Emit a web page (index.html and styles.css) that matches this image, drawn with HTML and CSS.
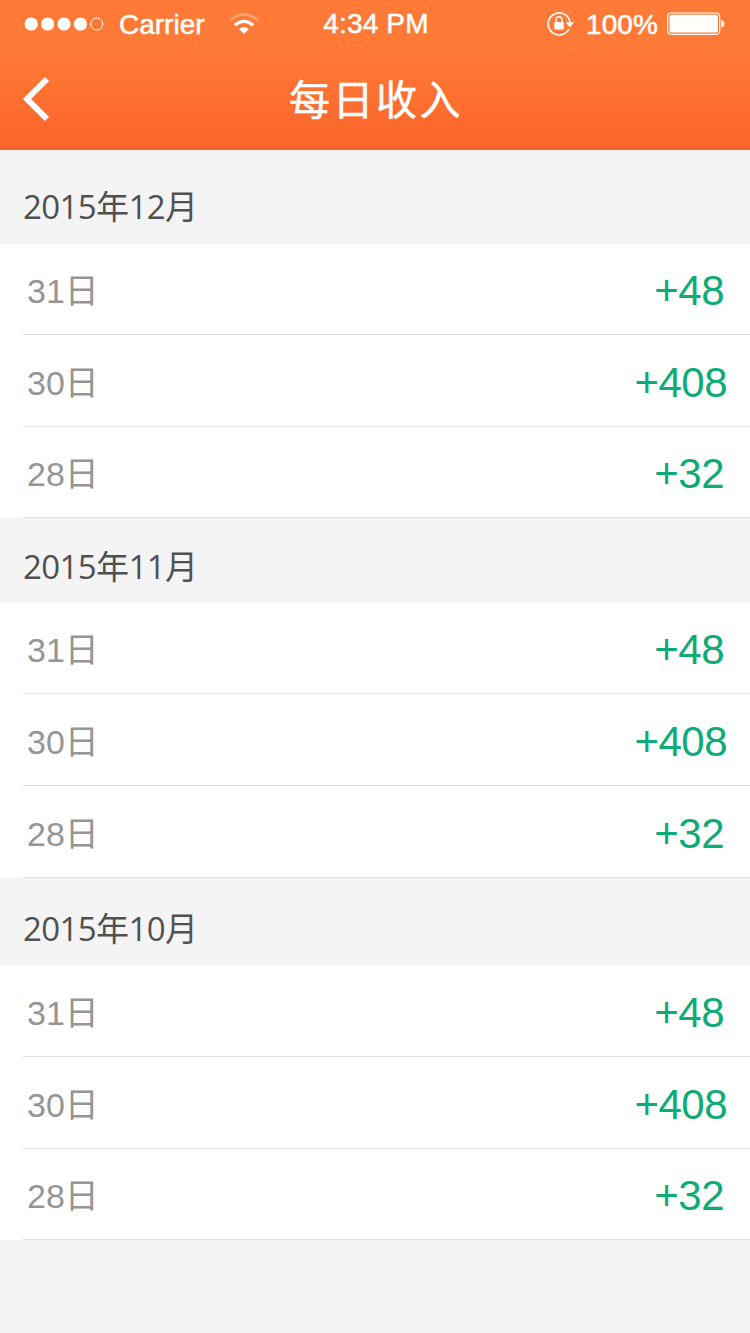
FILE: index.html
```html
<!DOCTYPE html>
<html lang="zh-CN">
<head>
<meta charset="utf-8">
<title>每日收入</title>
<link rel="stylesheet" href="styles.css">
</head>
<body>
<header class="top">
  <div class="status">
    <div class="status-left">
      <svg class="signal" width="80" height="16" viewBox="0 0 80 16"><g fill="#fff"><circle cx="7.2" cy="8" r="6.6"/><circle cx="23.6" cy="8" r="6.6"/><circle cx="40" cy="8" r="6.6"/><circle cx="56.4" cy="8" r="6.6"/></g><circle cx="72.8" cy="8" r="6" fill="none" stroke="#fff" stroke-width="1"/></svg>
      <span class="carrier">Carrier</span>
      <svg class="wifi" width="30" height="22" viewBox="0 0 30 22" fill="none"><path d="M1.2 7.2Q15-4.2 28.8 7.2" stroke="#fff" stroke-opacity=".32" stroke-width="2.6"/><path d="M5.8 12.3Q15 4.6 24.2 12.3" stroke="#fff" stroke-width="3.2"/><path d="M10.2 16.2Q15 11.8 19.8 16.2L15 21Z" fill="#fff"/></svg>
    </div>
    <span class="time">4:34 PM</span>
    <div class="status-right">
      <svg class="lock" width="28" height="26" viewBox="0 0 28 26" fill="none"><path d="M21.9 18.1A11 11 0 1 1 22.6 9.4L23 11.5" stroke="#fff" stroke-width="1.6"/><path d="M18.8 11.2H27L22.9 16.5Z" fill="#fff"/><rect x="7.3" y="11" width="9.4" height="7.4" rx=".7" fill="#fff"/><path d="M9 11V8.8a3 3 0 0 1 6 0V11" stroke="#fff" stroke-width="1.4"/></svg>
      <span class="percent">100%</span>
      <svg class="battery" width="58" height="24" viewBox="0 0 58 24"><rect x=".7" y="1" width="52" height="21.3" rx="3.5" fill="none" stroke="#fff" stroke-width="1.2"/><rect x="2.5" y="2.8" width="48.4" height="17.7" rx="2" fill="#fff"/><path d="M54.3 8Q57.4 9 57.4 11.8T54.3 15.6Z" fill="#fff"/></svg>
    </div>
  </div>
  <nav class="nav">
    <svg class="back" width="28" height="46" viewBox="0 0 28 46"><path d="M25 3 5 23 25 43" fill="none" stroke="#fff" stroke-width="6"/></svg>
    <h1 class="title">每日收入</h1>
  </nav>
</header>
<main>
  <section class="month december">
    <h2 class="heading">2015年12月</h2>
    <ul class="days">
      <li class="day"><span class="date">31日</span><span class="amount">+48</span></li>
      <li class="day"><span class="date">30日</span><span class="amount wide">+408</span></li>
      <li class="day"><span class="date">28日</span><span class="amount">+32</span></li>
    </ul>
  </section>
  <section class="month november">
    <h2 class="heading">2015年11月</h2>
    <ul class="days">
      <li class="day"><span class="date">31日</span><span class="amount">+48</span></li>
      <li class="day"><span class="date">30日</span><span class="amount wide">+408</span></li>
      <li class="day"><span class="date">28日</span><span class="amount">+32</span></li>
    </ul>
  </section>
  <section class="month october">
    <h2 class="heading">2015年10月</h2>
    <ul class="days">
      <li class="day"><span class="date">31日</span><span class="amount">+48</span></li>
      <li class="day"><span class="date">30日</span><span class="amount wide">+408</span></li>
      <li class="day"><span class="date">28日</span><span class="amount">+32</span></li>
    </ul>
  </section>
</main>
</body>
</html>
```
FILE: styles.css
```css
* { box-sizing: border-box; }
body {
  margin: 0;
  min-height: 1333px;
  background: #f4f4f4;
  font-family: "Liberation Sans", "Noto Sans CJK SC", sans-serif;
}
svg { display: block; flex: none; }
.top {
  height: 150px;
  color: #fff;
  background: linear-gradient(#ff7a36 0, #ff7a36 50px, #fb662a 140px, #fa6428 150px);
}
.status {
  height: 48px;
  display: grid;
  grid-template-columns: 1fr auto 1fr;
  align-items: center;
  font-size: 28px;
  line-height: 46px;
  -webkit-text-stroke: .5px #fff;
}
.status-left, .status-right { display: flex; align-items: center; }
.status-left { padding-left: 24px; }
.status-right { justify-content: flex-end; padding-right: 25px; }
.carrier { margin-left: 15px; padding-top: 2px; }
.wifi { margin-left: 24px; }
.time { letter-spacing: .15px; padding-left: 2px; margin-top: -1px; }
.percent { margin-left: 11px; padding-top: 2px; letter-spacing: .1px; }
.battery { margin-left: 9px; }
.nav {
  height: 102px;
  display: grid;
  grid-template-columns: 50px 1fr 50px;
  align-items: center;
}
.back { margin-left: 22px; }
.title {
  margin: 0;
  padding: 3px 0 0 2px;
  text-align: center;
  font-size: 41px;
  font-weight: 400;
  line-height: 60px;
  letter-spacing: 2.5px;
  -webkit-text-stroke: .5px #fff;
}
.heading {
  margin: 0;
  padding-left: 23px;
  font: 400 33px/46px "Open Sans", "Noto Sans CJK SC", sans-serif;
  letter-spacing: -.6px;
  color: #505050;
}
.days {
  margin: 0;
  padding: 0;
  list-style: none;
  display: grid;
  grid-template-rows: 91px 92px 91px;
  background: #fff;
}
.december .heading { height: 94px; padding-top: 34px; }
.november .heading { height: 85px; padding-top: 26px; }
.october .heading { height: 87px; padding-top: 28px; }
.november .days { grid-template-rows: 91px 92px 92px; }
.october .days { grid-template-rows: 92px 92px 91px; }
.day {
  margin-left: 23px;
  padding: 4px 26px 0 4px;
  display: flex;
  align-items: center;
  justify-content: space-between;
  border-bottom: 1px solid #dedede;
}
.date {
  font-size: 34px;
  line-height: 50px;
  color: #959595;
}
.amount {
  font-size: 42px;
  line-height: 50px;
  letter-spacing: -.5px;
  color: #0dac77;
}
.wide { margin-right: -3px; }
```
